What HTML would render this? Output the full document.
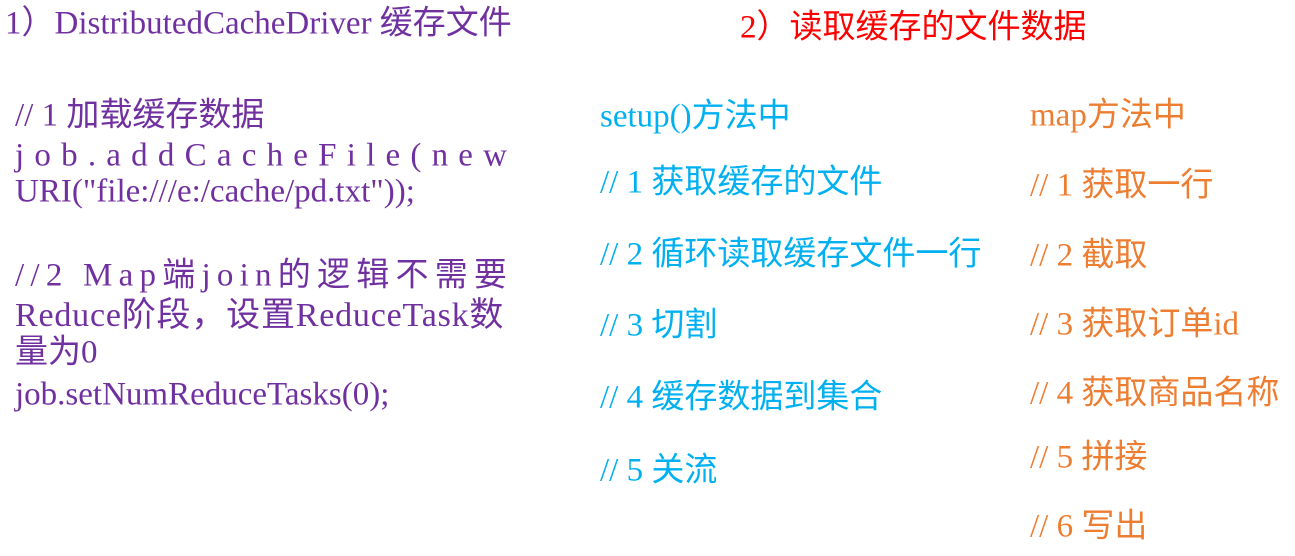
<!DOCTYPE html>
<html><head><meta charset="utf-8"><style>
body{margin:0;width:1295px;height:556px;background:#fff;position:relative;overflow:hidden;font-family:"Liberation Serif","Noto Sans CJK SC",serif;font-size:33px}
div.t{position:absolute;white-space:nowrap;line-height:1;transform:translateY(-50%)}
.p{color:#7030A0}.b{color:#00B0F0}.o{color:#ED7D31}.r{color:#FF0000}
.j{text-align:justify;text-align-last:justify;width:492px}
.f{display:flex;justify-content:space-between;width:492px}
</style></head><body>
<div class="t p" style="left:5px;top:24px">1）DistributedCacheDriver 缓存文件</div>
<div class="t r" style="left:740px;top:28px">2）读取缓存的文件数据</div>
<div class="t p" style="left:15px;top:116px">// 1 加载缓存数据</div>
<div class="t p j" style="left:15px;top:156px">j o b . a d d C a c h e F i l e ( n e w</div>
<div class="t p" style="left:15px;top:192px">URI("file:///e:/cache/pd.txt"));</div>
<div class="t p f" style="left:15px;top:276px"><span>/</span><span>/</span><span>2</span><span>&nbsp;</span><span>M</span><span>a</span><span>p</span><span>端</span><span>j</span><span>o</span><span>i</span><span>n</span><span>的</span><span>逻</span><span>辑</span><span>不</span><span>需</span><span>要</span></div>
<div class="t p" style="left:15px;top:316px;font-size:34px;letter-spacing:0.8px">Reduce阶段，设置ReduceTask数</div>
<div class="t p" style="left:15px;top:353px">量为0</div>
<div class="t p" style="left:15px;top:395px">job.setNumReduceTasks(0);</div>
<div class="t b" style="left:600px;top:117px">setup()方法中</div>
<div class="t b" style="left:600px;top:183px">// 1 获取缓存的文件</div>
<div class="t b" style="left:600px;top:255px">// 2 循环读取缓存文件一行</div>
<div class="t b" style="left:600px;top:326px">// 3 切割</div>
<div class="t b" style="left:600px;top:398px">// 4 缓存数据到集合</div>
<div class="t b" style="left:600px;top:471px">// 5 关流</div>
<div class="t o" style="left:1030px;top:116px">map方法中</div>
<div class="t o" style="left:1030px;top:186px">// 1 获取一行</div>
<div class="t o" style="left:1030px;top:256px">// 2 截取</div>
<div class="t o" style="left:1030px;top:325px">// 3 获取订单id</div>
<div class="t o" style="left:1030px;top:394px">// 4 获取商品名称</div>
<div class="t o" style="left:1030px;top:458px">// 5 拼接</div>
<div class="t o" style="left:1030px;top:527px">// 6 写出</div>
</body></html>
